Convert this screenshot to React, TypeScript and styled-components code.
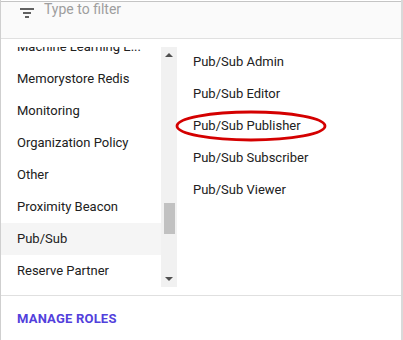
import React from 'react';
import styled, {createGlobalStyle} from 'styled-components';

const GlobalStyle = createGlobalStyle`
  html, body {
    margin: 0;
    padding: 0;
    background: #ffffff;
  }
  body {
    font-family: Roboto, 'Liberation Sans', sans-serif;
  }
`;

const Panel = styled.div`
  width: 400px;
  height: 340px;
  border-left: 1px solid #cfcfcf;
  border-right: 2px solid #d9d9d9;
  background: #ffffff;
  display: flex;
  flex-direction: column;
  overflow: hidden;
`;

const FilterBar = styled.div`
  margin-top: 1px;
  height: 36px;
  background: #fafafa;
  border-top: 1px solid #c4c4c4;
  border-bottom: 1px solid #e0e0e0;
  display: flex;
  align-items: flex-start;
  padding-left: 19px;
  gap: 10px;
  overflow: hidden;
`;

const FilterText = styled.span`
  font-size: 14px;
  line-height: 14px;
  margin-top: 0px;
  color: #9e9e9e;
`;

const Body = styled.div`
  display: flex;
  height: 257px;
  border-bottom: 1px solid #e0e0e0;
`;

const LeftColumn = styled.div`
  width: 176px;
  display: flex;
`;

const ListViewport = styled.div`
  width: 160px;
  margin: 8px 0;
  overflow: hidden;
`;

const List = styled.div`
  margin-top: -16px;
  display: flex;
  flex-direction: column;
`;

const Item = styled.div<{$selected?: boolean}>`
  height: 32px;
  flex-shrink: 0;
  display: flex;
  align-items: center;
  padding-left: 16px;
  font-size: 13px;
  color: #212121;
  background: ${p => (p.$selected ? '#f5f5f5' : 'transparent')};
  white-space: nowrap;
`;

const Scrollbar = styled.div`
  width: 16px;
  margin: 8px 0 8px;
  background: #f1f1f1;
  display: flex;
  flex-direction: column;
  align-items: center;
  justify-content: space-between;
  padding: 6px 0;
  box-sizing: border-box;
`;

const Arrow = styled.div<{$down?: boolean}>`
  width: 0;
  height: 0;
  border-left: 4px solid transparent;
  border-right: 4px solid transparent;
  ${p =>
    p.$down
      ? 'border-top: 4px solid #505050;'
      : 'border-bottom: 4px solid #505050;'}
`;

const Track = styled.div`
  flex: 1;
  width: 100%;
  display: flex;
  flex-direction: column;
  align-items: center;
  justify-content: flex-end;
  padding-bottom: 43px;
`;

const Thumb = styled.div`
  width: 11px;
  height: 31px;
  background: #c1c1c1;
`;

const RightColumn = styled.div`
  flex: 1;
  padding-top: 7px;
  display: flex;
  flex-direction: column;
  position: relative;
`;

const Highlight = styled.svg`
  position: absolute;
  left: -2px;
  top: 71px;
`;

const Footer = styled.div`
  height: 44px;
  display: flex;
  align-items: center;
  padding-left: 16px;
`;

const ManageButton = styled.span`
  font-size: 13px;
  font-weight: 700;
  color: #5240dc;
  letter-spacing: 0.2px;
`;

const FilterIcon = () => (
  <svg width="14" height="10" viewBox="0 0 14 10" style={{marginTop: 6}}>
    <rect x="0" y="0" width="14" height="2" fill="#616161" />
    <rect x="3" y="4" width="8" height="2" fill="#616161" />
    <rect x="5" y="8" width="4" height="2" fill="#616161" />
  </svg>
);

const services = [
  'Machine Learning E...',
  'Memorystore Redis',
  'Monitoring',
  'Organization Policy',
  'Other',
  'Proximity Beacon',
  'Pub/Sub',
  'Reserve Partner',
];

const roles = [
  'Pub/Sub Admin',
  'Pub/Sub Editor',
  'Pub/Sub Publisher',
  'Pub/Sub Subscriber',
  'Pub/Sub Viewer',
];

const App: React.FC = () => {
  return (
    <>
      <GlobalStyle />
      <Panel>
        <FilterBar>
          <FilterIcon />
          <FilterText>Type to filter</FilterText>
        </FilterBar>
        <Body>
          <LeftColumn>
            <ListViewport>
              <List>
                {services.map(s => (
                  <Item key={s} $selected={s === 'Pub/Sub'}>
                    {s}
                  </Item>
                ))}
              </List>
            </ListViewport>
            <Scrollbar>
              <Arrow />
              <Track>
                <Thumb />
              </Track>
              <Arrow $down />
            </Scrollbar>
          </LeftColumn>
          <RightColumn>
            {roles.map(r => (
              <Item key={r}>{r}</Item>
            ))}
            <Highlight width="154" height="34" viewBox="0 0 154 34">
              <ellipse
                cx="76"
                cy="16"
                rx="74"
                ry="14"
                fill="none"
                stroke="#d40000"
                strokeWidth="2.8"
              />
            </Highlight>
          </RightColumn>
        </Body>
        <Footer>
          <ManageButton>MANAGE ROLES</ManageButton>
        </Footer>
      </Panel>
    </>
  );
};

export default App;
